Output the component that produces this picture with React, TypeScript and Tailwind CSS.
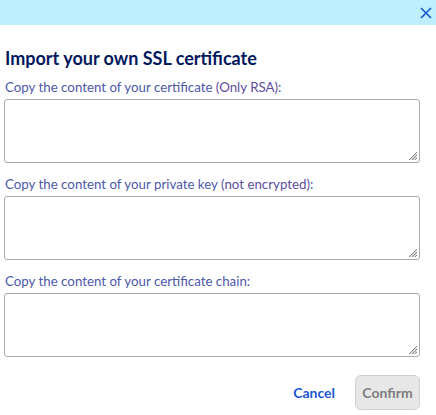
import React from "react";

function Grip() {
  return (
    <svg className="absolute right-[2px] bottom-[2px]" width="11" height="11" viewBox="0 0 11 11">
      <path d="M10 2 L2 10 M10 5 L5 10 M10 8 L8 10" stroke="#888" strokeWidth="1" fill="none" />
      <path d="M10 3.5 L3.5 10 M10 6.5 L6.5 10" stroke="#bbb" strokeWidth="1" fill="none" />
    </svg>
  );
}

function Field({ label, note }: { label: string; note?: string }) {
  return (
    <div className="flex flex-col">
      <label className="text-[13.3px] leading-[18px] text-[#4c58a8] pl-[5px]">
        {label}
        {note && <span className="text-[#5e4d9e]"> {note}</span>}:
      </label>
      <div className="relative mt-[3px] ml-[4px] w-[416px] h-[64px]">
        <textarea className="block w-full h-full border border-[#a9a9ad] rounded-[3px] resize-none outline-none bg-white" />
        <Grip />
      </div>
    </div>
  );
}

export default function App() {
  return (
    <div className="w-[436px] h-[415px] bg-white flex flex-col" style={{ fontFamily: "Lato, 'Open Sans', sans-serif" }}>
      <div className="h-[25px] shrink-0 bg-[#bdefff] flex items-center justify-end pr-[3px]">
        <svg width="14" height="14" viewBox="0 0 14 14">
          <path d="M2 2 L12 12 M12 2 L2 12" stroke="#1557d0" strokeWidth="1.6" fill="none" />
        </svg>
      </div>
      <h1 className="mt-[22px] pl-[5px] text-[18px] leading-[22px] font-bold text-[#00185e]">Import your own SSL certificate</h1>
      <div className="mt-[9px] flex flex-col gap-[12px]">
        <Field label="Copy the content of your certificate" note="(Only RSA)" />
        <Field label="Copy the content of your private key" note="(not encrypted)" />
        <Field label="Copy the content of your certificate chain" />
      </div>
      <div className="mt-[18px] flex items-center justify-end pr-[16px] gap-[20px]">
        <button className="text-[14px] font-bold text-[#1a56d6]">Cancel</button>
        <button className="h-[35px] w-[65px] rounded-[6px] border border-[#cfcfcf] bg-[#e7e7e7] text-[14px] font-bold text-[#7d7d7d]">Confirm</button>
      </div>
    </div>
  );
}
